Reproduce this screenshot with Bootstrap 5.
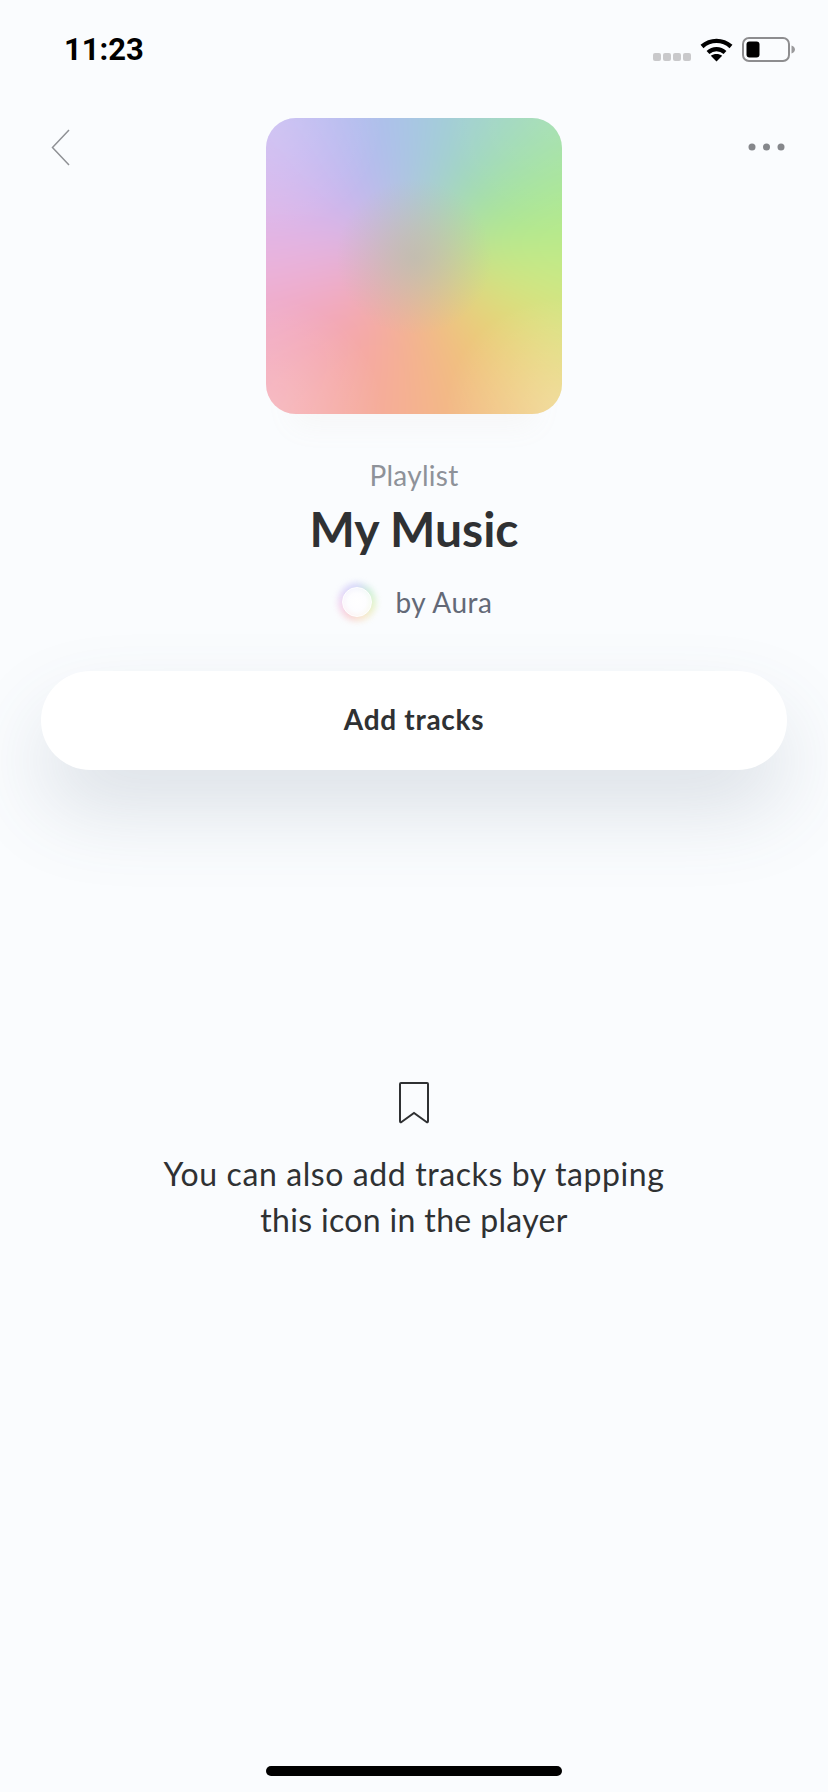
<!DOCTYPE html>
<html lang="en">
<head>
    <meta charset="UTF-8">
    <title>My Music</title>
    <link href="https://cdn.jsdelivr.net/npm/bootstrap@5.3.3/dist/css/bootstrap.min.css" rel="stylesheet">
    <style>
        body { background: #fafcfe; font-family: "Lato", "Open Sans", sans-serif; color: #2f3133; min-height: 1792px; overflow: hidden; }
        .phone-screen { min-height: 1792px; }
        .status-row { height: 118px; padding: 37px 32px 0 64px; }
        .status-time { font-family: "Roboto", sans-serif; font-weight: 700; font-size: 31px; line-height: 25px; color: #000; }
        .signal-dots { gap: 2px; margin-top: 16px; margin-right: 9px; }
        .signal-dots span { width: 8px; height: 8px; border-radius: 2px; background: #c9c9cb; }
        .wifi-icon { margin-right: 9px; }
        .top-row { padding: 0 43px; }
        .top-side { flex: 1 1 0; }
        .back-icon { margin-top: 11px; margin-left: 8px; }
        .more-icon { margin-top: 25px; }
        .cover-art { position: relative; overflow: hidden; width: 296px; height: 296px; border-radius: 30px; }
        .cover-art::before { content: ""; position: absolute; inset: -90px; filter: blur(36px);
            background: conic-gradient(from 0deg at 50% 47%, #a5c9e4 5deg, #9fd8c0 37deg, #9fe29c 58deg, #b3ec8a 80deg, #d6e884 112deg, #ecd070 133deg, #f2bc80 160deg, #f6ac98 190deg, #f4a4b4 230deg, #eab6e4 270deg, #c6b6f2 310deg, #b2baf0 335deg, #a5c9e4 365deg); }
        .cover-art::after { content: ""; position: absolute; inset: 0;
            background:
                radial-gradient(circle at 50% 47%, rgba(188,186,176,.7) 0, rgba(188,186,176,0) 36%),
                radial-gradient(circle at 0 0, rgba(255,255,255,.2) 0, rgba(255,255,255,0) 28%),
                radial-gradient(circle at 100% 0, rgba(255,255,255,.1) 0, rgba(255,255,255,0) 28%),
                radial-gradient(circle at 100% 100%, rgba(255,255,255,.3) 0, rgba(255,255,255,0) 28%),
                radial-gradient(circle at 0 100%, rgba(255,255,255,.25) 0, rgba(255,255,255,0) 28%); }
        .art-wrap { border-radius: 30px; box-shadow: 0 38px 30px -28px rgba(200,180,150,.08); }
        .kind-label { font-size: 28px; letter-spacing: .3px; line-height: 32px; color: #8e9299; margin-top: 45px; }
        .list-title { font-size: 48px; line-height: 56px; font-weight: 700; color: #2f3133; margin-top: 10px; }
        .owner-row { margin-top: 23px; height: 44px; gap: 24px; padding-left: 6px; }
        .aura-mark { position: relative; width: 30px; height: 30px; }
        .aura-mark::before { content: ""; position: absolute; inset: -4px; border-radius: 50%; filter: blur(3px); opacity: .55;
            background: conic-gradient(#b6b8f5, #a8e6b8, #d3ec9a, #f6d7a0, #f7afb0, #f0b4e0, #c8b8f5, #b6b8f5); }
        .aura-mark::after { content: ""; position: absolute; inset: 0; border-radius: 50%; border: 1.5px solid #fff;
            background: radial-gradient(circle, #fff 0, #fdfdff 45%, rgba(255,255,255,.55) 100%); }
        .owner-name { font-size: 28px; letter-spacing: .5px; color: #636977; }
        .add-btn { display: block; width: 746px; height: 99px; margin: 47px auto 0; padding: 0 0 4px; border: 0; border-radius: 50px; background: #fff;
            font-size: 28px; letter-spacing: .7px; font-weight: 700; color: #2f3133; box-shadow: 0 40px 80px rgba(80,95,120,.17); }
        .add-btn:hover, .add-btn:active { background: #fff !important; color: #2f3133 !important; }
        .hint-box { margin-top: 312px; }
        .hint-text { font-size: 32px; letter-spacing: .6px; line-height: 46px; color: #2f3133; margin-top: 27px; }
        .hint-second { letter-spacing: .35px; }
        .home-bar { width: 296px; height: 10px; border-radius: 5px; background: #000; margin-bottom: 16px; }
    </style>
</head>
<body>
<div class="phone-screen d-flex flex-column">
    <div class="status-row d-flex justify-content-between align-items-start">
        <div class="status-time">11:23</div>
        <div class="d-flex align-items-start">
            <div class="signal-dots d-flex"><span></span><span></span><span></span><span></span></div>
            <svg class="wifi-icon" width="33" height="25" viewBox="0 0 33 25">
                <path d="M2 9.500C10.500 2 22.500 2 31 9.500" fill="none" stroke="#000" stroke-width="4.400"/>
                <path d="M8 15.500C13 11 20 11 25 15.500" fill="none" stroke="#000" stroke-width="4.200"/>
                <path d="M16.500 24.500L10.800 18.800C14 16.300 19 16.300 22.200 18.800Z" fill="#000"/>
            </svg>
            <svg width="54" height="25" viewBox="0 0 54 25">
                <rect x="1" y="1" width="46" height="23" rx="6" fill="none" stroke="#8d8d8f" stroke-width="2"/>
                <rect x="4.500" y="4.500" width="13" height="16" rx="3" fill="#000"/>
                <path d="M49.500 8.500C52 9.500 53 11 53 12.500C53 14 52 15.500 49.500 16.500Z" fill="#9a9a9c"/>
            </svg>
        </div>
    </div>

    <div class="top-row d-flex align-items-start">
        <div class="top-side">
            <svg class="back-icon" width="19" height="37" viewBox="0 0 19 37">
                <path d="M18 1L1.500 18.500L18 36" fill="none" stroke="#8f9195" stroke-width="1.500"/>
            </svg>
        </div>
        <div class="art-wrap"><div class="cover-art"></div></div>
        <div class="top-side d-flex justify-content-end">
            <svg class="more-icon" width="37" height="8" viewBox="0 0 37 8">
                <circle cx="4" cy="4" r="3.500" fill="#85878b"/>
                <circle cx="18.500" cy="4" r="3.500" fill="#85878b"/>
                <circle cx="33" cy="4" r="3.500" fill="#85878b"/>
            </svg>
        </div>
    </div>

    <div class="text-center">
        <div class="kind-label">Playlist</div>
        <div class="list-title">My Music</div>
        <div class="owner-row d-flex justify-content-center align-items-center">
            <span class="aura-mark"></span>
            <span class="owner-name">by Aura</span>
        </div>
    </div>

    <button type="button" class="btn add-btn">Add tracks</button>

    <div class="hint-box text-center">
        <svg width="30" height="42" viewBox="0 0 30 42">
            <path d="M2 1H28Q29 1 29 2V39Q29 41 27.500 40L15 31L2.500 40Q1 41 1 39V2Q1 1 2 1Z" fill="none" stroke="#2f3133" stroke-width="2"/>
        </svg>
        <div class="hint-text">You can also add tracks by tapping<br><span class="hint-second">this icon in the player</span></div>
    </div>

    <div class="home-bar mt-auto mx-auto"></div>
</div>
<script src="https://cdn.jsdelivr.net/npm/bootstrap@5.3.3/dist/js/bootstrap.bundle.min.js"></script>
</body>
</html>
